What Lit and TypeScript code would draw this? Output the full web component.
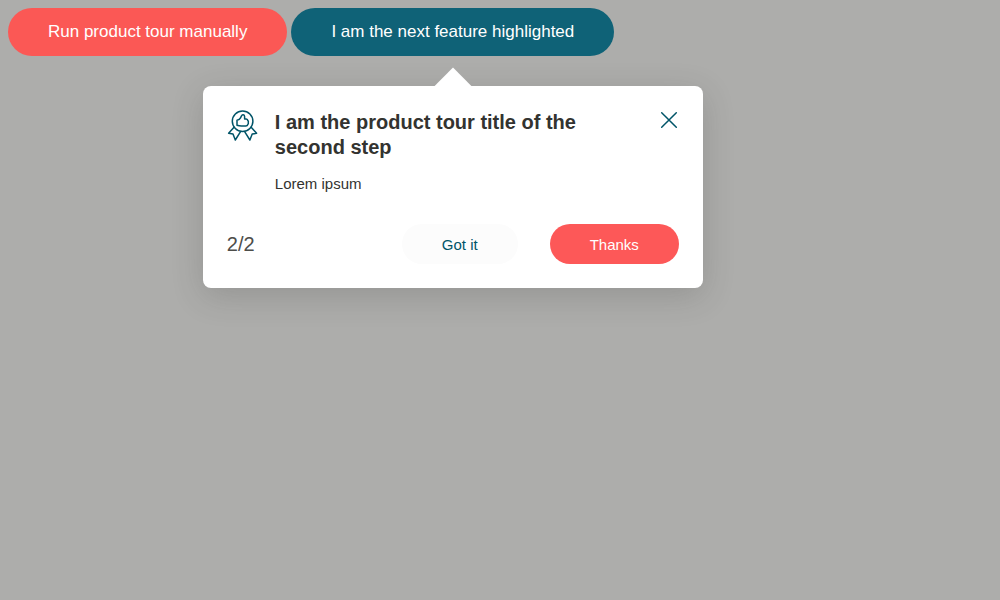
import { LitElement, html, css } from "lit";
import { customElement, property, state } from "lit/decorators.js";

@customElement("tour-popover")
export class TourPopover extends LitElement {
  @property() heading = "";
  @property({ type: Number }) step = 1;
  @property({ type: Number }) total = 1;

  static styles = css`
    :host {
      display: block;
      box-sizing: border-box;
      padding: 24px;
      border-radius: 8px;
      background: #fff;
      color: #333330;
      box-shadow: 0 8px 32px rgba(51, 51, 48, 0.2);
    }
    .arrow {
      position: absolute;
      top: -13px;
      left: calc(50% - 13px);
      width: 26px;
      height: 26px;
      background: #fff;
      transform: rotate(45deg);
    }
    .content {
      position: relative;
      display: flex;
      align-items: flex-start;
      gap: 16px;
    }
    .badge {
      flex: none;
      width: 32px;
      height: 32px;
    }
    .icon {
      display: block;
      fill: none;
      stroke: #005468;
      stroke-width: 1.5;
      stroke-linecap: round;
      stroke-linejoin: round;
    }
    .text {
      flex: 1;
      padding-right: 32px;
    }
    h2 {
      margin: 0 0 12px;
      font-size: 20px;
      line-height: 25px;
    }
    .body {
      font-size: 15px;
      line-height: 24px;
    }
    button {
      border: 0;
      font-family: inherit;
      cursor: pointer;
    }
    .close {
      flex: none;
      padding: 0;
      background: none;
    }
    .footer {
      display: flex;
      align-items: center;
      gap: 32px;
      margin-top: 28px;
    }
    .count {
      flex: 1;
      color: #4d4d4a;
      font-size: 20px;
    }
    .action {
      height: 40px;
      padding: 0 40px;
      border-radius: 20px;
      background: #fcfcfc;
      color: #005468;
      font-size: 15px;
    }
    .primary {
      background: #fd5858;
      color: #fff;
    }
  `;

  private close() {
    this.dispatchEvent(new CustomEvent("tour-close"));
  }

  render() {
    return html`
      <div class="arrow"></div>
      <div class="content">
        <svg class="icon badge" viewBox="0 0 32 32" aria-hidden="true">
          <circle cx="15.6" cy="11.3" r="10.3" />
          <path d="M6.8 17.6 1.6 23.3 6 24.1 8.3 30 13.4 21.8" />
          <path d="M24.4 17.6 29.6 23.3 25.2 24.1 22.9 30 17.8 21.8" />
          <path
            d="M10 10.2Q12.7 9.8 13.5 7.9L14.5 5.9Q15 4.6 16.2 4.8 17.6 5.1 17.6 6.6V8.9H19.2Q20.7 9 20.7 10.4 21.7 11.2 21.3 12.5 21.6 13.6 20.8 14.5 20.4 16 18.8 16.1H14.4Q12.2 16 10 15.3Z"
          />
        </svg>
        <div class="text">
          <h2>${this.heading}</h2>
          <div class="body"><slot></slot></div>
        </div>
        <button class="close" aria-label="Close" @click=${this.close}>
          <svg class="icon" width="20" height="20" viewBox="0 0 20 20">
            <path d="M2.7 2.7 17.3 17.3M17.3 2.7 2.7 17.3" />
          </svg>
        </button>
      </div>
      <div class="footer">
        <span class="count">${this.step}/${this.total}</span>
        <button class="action" @click=${this.close}>Got it</button>
        <button class="action primary" @click=${this.close}>Thanks</button>
      </div>
    `;
  }
}

@customElement("app-root")
export class AppRoot extends LitElement {
  @state() private open = true;

  static styles = css`
    :host {
      display: block;
      box-sizing: border-box;
      min-height: 100vh;
      padding: 8px;
      background: #adadab;
      font-family: "Liberation Sans", Arial, sans-serif;
    }
    .toolbar {
      display: flex;
      gap: 4px;
    }
    .feature {
      position: relative;
    }
    .button {
      display: block;
      padding: 12px 40px;
      border: 0;
      border-radius: 24px;
      color: #fff;
      font-family: inherit;
      font-size: 17px;
      line-height: 24px;
      cursor: pointer;
    }
    .run {
      background: #fb5855;
    }
    .next {
      background: #0f6277;
    }
    .popover {
      position: absolute;
      top: calc(100% + 30px);
      left: calc(50% - 250px);
      width: 500px;
    }
  `;

  render() {
    return html`
      <div class="toolbar">
        <button class="button run" @click=${() => (this.open = true)}>
          Run product tour manually
        </button>
        <div class="feature">
          <button class="button next">I am the next feature highlighted</button>
          ${this.open
            ? html`<tour-popover
                class="popover"
                role="dialog"
                heading="I am the product tour title of the second step"
                .step=${2}
                .total=${2}
                @tour-close=${() => (this.open = false)}
                >Lorem ipsum</tour-popover
              >`
            : null}
        </div>
      </div>
    `;
  }
}
